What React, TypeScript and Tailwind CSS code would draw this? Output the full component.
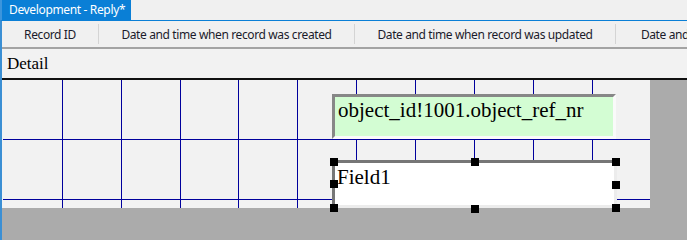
import React from 'react';

const columns = [
    { label: 'Record ID', width: 'w-[96px]' },
    { label: 'Date and time when record was created', width: 'w-[256px]' },
    { label: 'Date and time when record was updated', width: 'w-[261px]' },
    { label: 'Date and time when record was deleted', width: 'w-[261px]' },
];

// grid lines of the design surface, in canvas pixels
const verticalLines = [60, 119, 178, 236, 295, 354, 413, 472, 531, 590];
const horizontalLines = [59, 119];

const Handle: React.FC<{ className: string }> = ({ className }) => (
    <div className={`absolute w-[8px] h-[8px] bg-black ${className}`} />
);

const DesignGrid: React.FC = () => (
    <svg className="absolute inset-0" width={648} height={128}>
        {verticalLines.map((x) => (
            <line key={`v${x}`} x1={x + 0.5} y1={0} x2={x + 0.5} y2={128} stroke="#00009c" strokeWidth={1} />
        ))}
        {horizontalLines.map((y) => (
            <line key={`h${y}`} x1={1} y1={y + 0.5} x2={648} y2={y + 0.5} stroke="#00009c" strokeWidth={1} />
        ))}
    </svg>
);

const App: React.FC = () => {
    return (
        <div className="w-[687px] h-[240px] overflow-hidden flex flex-col bg-[#f0f0f0]">
            {/* document tab */}
            <div className="h-[20px] flex shrink-0">
                <div className="w-[131px] bg-[#0a7fd6] border-l-2 border-[#3b95dc] text-white text-[12px] tracking-[-0.35px] leading-[20px] pl-[7px] whitespace-nowrap overflow-hidden font-['Noto_Sans',sans-serif]">
                    Development - Reply*
                </div>
            </div>

            <div className="flex-1 flex flex-col border-t border-[#0a7fd6] border-l-2 border-l-[#3b8fd4] min-h-0">
                {/* field header row */}
                <div className="h-[28px] shrink-0 flex items-center border-b-2 border-[#a3a3a3] font-['Noto_Sans',sans-serif] text-[12px] tracking-[-0.38px] text-[#1b1b2b]">
                    {columns.map((col, i) => (
                        <div key={i} className={`${col.width} shrink-0 h-[20px] pt-[1px] flex items-center justify-center whitespace-nowrap ${i > 0 ? 'border-l border-[#d4d4d4]' : ''}`}>
                            {col.label}
                        </div>
                    ))}
                </div>

                {/* section bar */}
                <div className="h-[31px] shrink-0 flex items-center pl-[5px] pt-[1px] border-b-2 border-[#111111] bg-[#f2f2f2] font-['Liberation_Serif',serif] text-[17px] text-black">
                    Detail
                </div>

                {/* design surface */}
                <div className="flex-1 bg-[#ababab] flex flex-col">
                    <div className="relative w-[648px] h-[128px] bg-[#f2f2f2] shrink-0">
                        <DesignGrid />

                        <div className="absolute left-[330px] top-[14px] w-[284px] h-[45px] bg-[#d3fdd3] border-[3px] border-t-[#878787] border-l-[#878787] border-r-[#fafafa] border-b-[#fafafa] pl-[3px] pt-[1px] font-['Liberation_Serif',serif] text-[21px] leading-[24px] text-black whitespace-nowrap">
                            object_id!1001.object_ref_nr
                        </div>

                        {/* selected control with its sizing handles */}
                        <div className="absolute left-[330px] top-[80px] w-[285px] h-[48px]">
                            <div className="w-full h-full bg-white border-[3px] border-t-[#767676] border-l-[#767676] border-r-[#ececec] border-b-[#ececec] pl-[2px] pt-[2px] font-['Liberation_Serif',serif] text-[21px] leading-[24px] text-black">
                                Field1
                            </div>
                            <Handle className="-left-[2px] -top-[2px]" />
                            <Handle className="left-[139px] -top-[2px]" />
                            <Handle className="-right-[3px] -top-[2px]" />
                            <Handle className="-left-[2px] top-[20px]" />
                            <Handle className="-right-[3px] top-[21px]" />
                            <Handle className="-left-[2px] -bottom-[4px]" />
                            <Handle className="left-[139px] -bottom-[5px]" />
                            <Handle className="-right-[3px] -bottom-[4px]" />
                        </div>
                    </div>
                    <div className="flex-1" />
                </div>
            </div>
        </div>
    );
};

export default App;
